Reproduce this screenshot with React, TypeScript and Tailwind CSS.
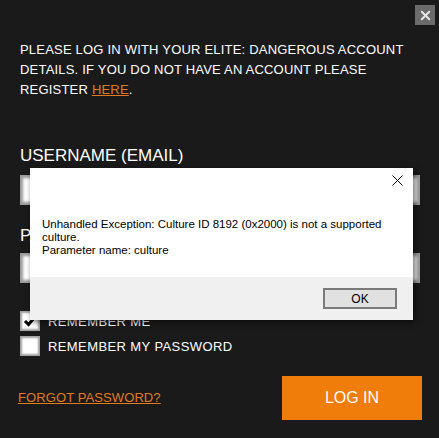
import { X } from "lucide-react";

function Field() {
    return (
        <div className="h-[30px] w-[400px] bg-white shadow-[inset_0_0_3px_3px_#9a9a9a]" />
    );
}

function Check({ checked, label }: { checked?: boolean; label: string }) {
    return (
        <div className="flex items-center gap-[8px]">
            <div className="w-[20px] h-[20px] bg-white shadow-[inset_0_0_2px_2px_#a0a0a0] flex items-center justify-center">
                {checked && (
                    <svg width="14" height="14" viewBox="0 0 14 14">
                        <path d="M2 7 L5.5 10.5 L12 3" stroke="#000" strokeWidth="3" fill="none" />
                    </svg>
                )}
            </div>
            <span className="text-[13px] tracking-[0.4px] text-white leading-none">{label}</span>
        </div>
    );
}

export default function App() {
    return (
        <div className="relative w-[439px] h-[438px] overflow-hidden bg-[#1a1a1a] font-['Liberation_Sans',Arial,sans-serif]">
            <div className="flex justify-end pt-[5px] pr-[4px]">
                <button className="w-[20px] h-[20px] bg-[#6b6b6b] flex items-center justify-center">
                    <X size={15} strokeWidth={3} color="#e8e8e8" />
                </button>
            </div>

            <div className="px-[20px]">
                <p className="mt-[15px] text-[13px] tracking-[0.2px] leading-[20px] text-white">
                    PLEASE LOG IN WITH YOUR ELITE: DANGEROUS ACCOUNT DETAILS. IF YOU DO NOT HAVE AN ACCOUNT PLEASE REGISTER{" "}
                    <span className="text-[#e07b20] underline">HERE</span>.
                </p>

                <div className="mt-[46px] text-[17px] leading-[20px] text-white">USERNAME (EMAIL)</div>
                <div className="mt-[9px]"><Field /></div>

                <div className="mt-[21px] text-[17px] leading-[20px] text-white">PASSWORD</div>
                <div className="mt-[7px]"><Field /></div>

                <div className="mt-[28px] flex flex-col gap-[5px]">
                    <Check checked label="REMEMBER ME" />
                    <Check label="REMEMBER MY PASSWORD" />
                </div>

                <div className="mt-[20px] flex items-center justify-between">
                    <a className="-ml-[2px] text-[13px] tracking-[0.1px] text-[#e07b20] underline">FORGOT PASSWORD?</a>
                    <button className="-mr-[3px] w-[140px] h-[44px] bg-[#f07c0a] text-white text-[16px]">LOG IN</button>
                </div>
            </div>

            {/* message box */}
            <div className="absolute left-[30px] top-[168px] w-[383px] h-[152px] flex flex-col shadow-[2px_2px_6px_rgba(0,0,0,0.6)]">
                <div className="flex-1 bg-white">
                    <div className="flex justify-end pt-[7px] pr-[10px]">
                        <svg width="11" height="11" viewBox="0 0 11 11">
                            <path d="M0.5 0.5 L10.5 10.5 M10.5 0.5 L0.5 10.5" stroke="#000" strokeWidth="1" />
                        </svg>
                    </div>
                    <div className="mt-[32px] pl-[12px] text-[11.5px] leading-[13px] text-black whitespace-nowrap">
                        Unhandled Exception: Culture ID 8192 (0x2000) is not a supported<br />
                        culture.<br />
                        Parameter name: culture
                    </div>
                </div>
                <div className="h-[43px] bg-[#f0f0f0] flex items-center justify-end pr-[16px]">
                    <button className="w-[74px] h-[21px] bg-[#e1e1e1] border-2 border-[#7a7a7a] text-[12px] text-black leading-none">OK</button>
                </div>
            </div>
        </div>
    );
}
